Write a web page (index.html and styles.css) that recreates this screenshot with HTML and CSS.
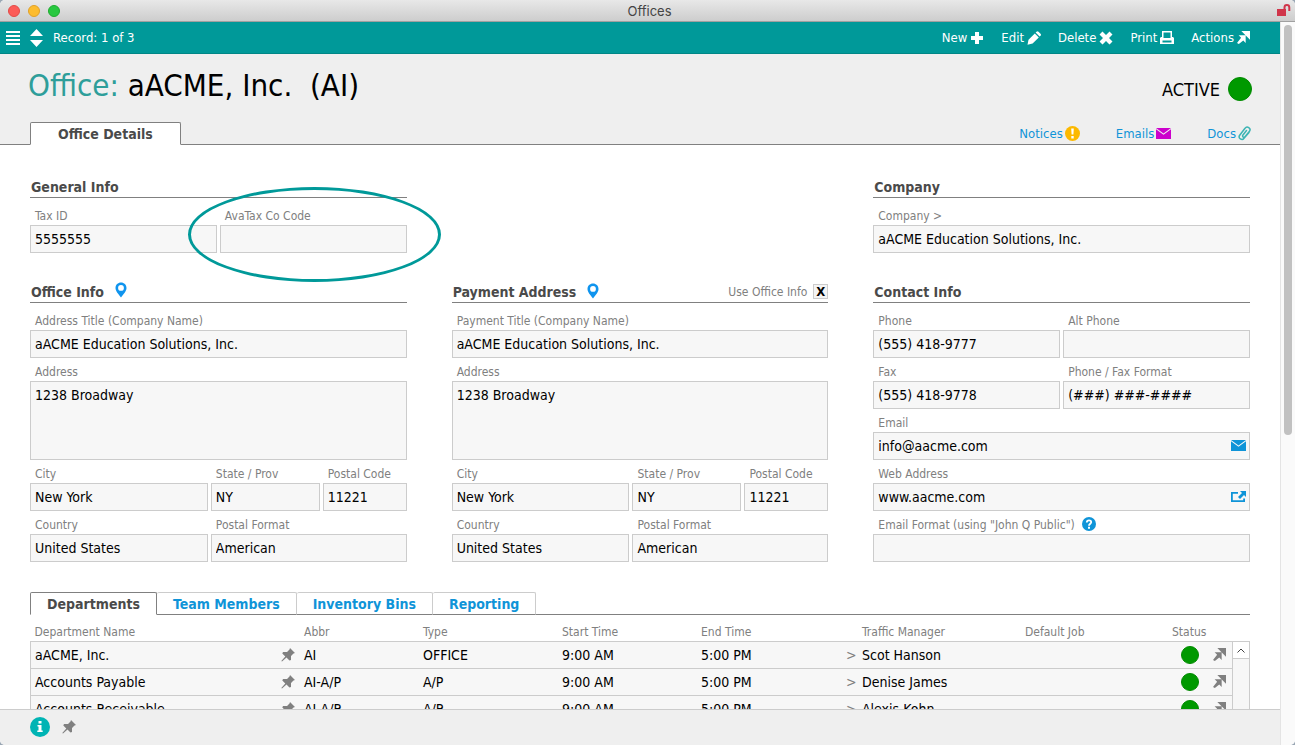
FILE: index.html
```html
<!DOCTYPE html>
<html lang="en">
<head>
  <meta charset="UTF-8">
  <title>Offices</title>
  <link rel="stylesheet" href="styles.css">
</head>
<body>
  <!-- Shared icons -->
  <svg class="sprite" aria-hidden="true">
    <symbol id="pin" viewBox="0 0 14 14"><path d="M9 0l5 5-1.500.6L10 8v4l-1.500.5-3-3L1 13.500.3 13l4-4.500-3-3L2 4h4l2.500-2.500z"/></symbol>
    <symbol id="go" viewBox="0 0 12 12"><path d="M4 0h8v8zM1.500 4H8v7L5.800 8.800 1.700 12 0 11l3.800-4.700z"/></symbol>
    <symbol id="marker" viewBox="0 0 12 16"><path fill-rule="evenodd" d="M6 .5c3.100 0 5.500 2.400 5.500 5.400C11.500 9 8.500 12 6 15.500 3.500 12 .5 9 .5 5.900.5 2.900 2.900.5 6 .5zM6 3a2.900 2.900 0 1 0 0 5.800A2.900 2.900 0 0 0 6 3z"/></symbol>
    <symbol id="mail" viewBox="0 0 15 11"><path d="M0 0h15L7.500 5.500zM0 1.200l7.500 5.500L15 1.200V11H0z"/></symbol>
  </svg>

  <div class="window">
    <header class="titlebar">
      <div class="lights">
        <span class="light red"></span>
        <span class="light yellow"></span>
        <span class="light green"></span>
      </div>
      <span class="window-title">Offices</span>
      <svg class="lock" viewBox="0 0 14 13"><path d="M0 5h9v7H0z"/><path class="shackle" d="M7.500 6V3.500a2.400 2.400 0 0 1 4.800 0V7"/></svg>
    </header>

    <div class="frame">
      <div class="app">

        <!-- Toolbar -->
        <nav class="toolbar">
          <button class="tool" aria-label="Menu"><svg width="14" height="14" viewBox="0 0 14 14"><path d="M0 0h14v2H0zM0 4h14v2H0zM0 8h14v2H0zM0 12h14v2H0z"/></svg></button>
          <button class="tool" aria-label="Next or previous record"><svg width="13" height="18" viewBox="0 0 13 18"><path d="M6.500 0L13 7H0zM0 11h13l-6.500 7z"/></svg></button>
          <span class="record">Record: 1 of 3</span>
          <div class="actions">
            <button class="tool">New <svg width="14" height="14" viewBox="0 0 14 14"><path d="M5 1h4v4h4v4H9v4H5V9H1V5h4z"/></svg></button>
            <button class="tool">Edit <svg width="14" height="14" viewBox="0 0 14 14"><path d="M9.500.7c.7-.7 1.300-.7 2 0L13.500 2.700c.7.700.7 1.300 0 2l-.9.9L8.600 1.600zM7.800 2.400l4 4-6.200 6.200L.5 13.700l1-5z"/></svg></button>
            <button class="tool">Delete <svg width="14" height="14" viewBox="0 0 14 14"><path d="M3.500.5L7 4l3.500-3.500 3 3L10 7l3.500 3.500-3 3L7 10l-3.500 3.500-3-3L4 7 .5 3.500z"/></svg></button>
            <button class="tool">Print <svg width="14" height="14" viewBox="0 0 14 14"><path fill-rule="evenodd" d="M2 0h10v6h1l1 1v6H0V7l1-1h1zm1.500 1.500V7h7V1.500zM2.500 9.500v2h9v-2z"/></svg></button>
            <button class="tool">Actions <svg width="13" height="13"><use href="#go"/></svg></button>
          </div>
        </nav>

        <!-- Record header -->
        <div class="record-head">
          <div class="headline">
            <h1><span class="kind">Office:</span> aACME, Inc.&nbsp; (AI)</h1>
            <div class="active-state">ACTIVE <span class="dot large"></span></div>
          </div>
          <div class="head-tabs">
            <button class="tab current main-tab">Office Details</button>
            <div class="links">
              <a href="#notices">Notices <svg width="15" height="15" viewBox="0 0 15 15"><circle cx="7.500" cy="7.500" r="7.500" fill="#fcb900"/><path fill="#fff" d="M6.200 2.500h2.600l-.4 6H6.600zM6.300 10h2.400v2.400H6.300z"/></svg></a>
              <a href="#emails">Emails <svg class="magenta" width="15" height="11"><use href="#mail"/></svg></a>
              <a href="#docs">Docs <svg width="13" height="15" viewBox="0 0 13 15"><path fill="none" stroke="#3cb4b4" stroke-width="1.500" stroke-linecap="round" d="M11 6.500l-5 5.800a2.500 2.500 0 0 1-4.300-3L7 2.300a2.700 2.700 0 0 1 4.500 3L7 10.700a1.300 1.300 0 0 1-2.200-1.500l3.700-4.700"/></svg></a>
            </div>
          </div>
        </div>

        <main class="content">
          <form class="sections">
            <section class="general">
              <h2>General Info</h2>
              <div class="fields halves">
                <div class="field">
                  <label for="tax-id">Tax ID</label>
                  <input type="text" id="tax-id" value="5555555">
                </div>
                <div class="field highlighted">
                  <label for="avatax">AvaTax Co Code</label>
                  <input type="text" id="avatax">
                </div>
              </div>
            </section>

            <section class="company">
              <h2>Company</h2>
              <div class="fields">
                <div class="field">
                  <label for="company">Company &gt;</label>
                  <input type="text" id="company" value="aACME Education Solutions, Inc.">
                </div>
              </div>
            </section>

            <section>
              <h2>Office Info <svg class="marker" width="12" height="16"><use href="#marker"/></svg></h2>
              <div class="fields address">
                <div class="field full">
                  <label for="o-title">Address Title (Company Name)</label>
                  <input type="text" id="o-title" value="aACME Education Solutions, Inc.">
                </div>
                <div class="field full">
                  <label for="o-address">Address</label>
                  <textarea id="o-address">1238 Broadway</textarea>
                </div>
                <div class="field">
                  <label for="o-city">City</label>
                  <input type="text" id="o-city" value="New York">
                </div>
                <div class="field">
                  <label for="o-state">State / Prov</label>
                  <input type="text" id="o-state" value="NY">
                </div>
                <div class="field">
                  <label for="o-zip">Postal Code</label>
                  <input type="text" id="o-zip" value="11221">
                </div>
                <div class="field">
                  <label for="o-country">Country</label>
                  <input type="text" id="o-country" value="United States">
                </div>
                <div class="field wide">
                  <label for="o-format">Postal Format</label>
                  <input type="text" id="o-format" value="American">
                </div>
              </div>
            </section>

            <section>
              <div class="section-head">
                <h2>Payment Address <svg class="marker" width="12" height="16"><use href="#marker"/></svg></h2>
                <label class="use-office">Use Office Info <input type="checkbox" checked></label>
              </div>
              <div class="fields address">
                <div class="field full">
                  <label for="p-title">Payment Title (Company Name)</label>
                  <input type="text" id="p-title" value="aACME Education Solutions, Inc.">
                </div>
                <div class="field full">
                  <label for="p-address">Address</label>
                  <textarea id="p-address">1238 Broadway</textarea>
                </div>
                <div class="field">
                  <label for="p-city">City</label>
                  <input type="text" id="p-city" value="New York">
                </div>
                <div class="field">
                  <label for="p-state">State / Prov</label>
                  <input type="text" id="p-state" value="NY">
                </div>
                <div class="field">
                  <label for="p-zip">Postal Code</label>
                  <input type="text" id="p-zip" value="11221">
                </div>
                <div class="field">
                  <label for="p-country">Country</label>
                  <input type="text" id="p-country" value="United States">
                </div>
                <div class="field wide">
                  <label for="p-format">Postal Format</label>
                  <input type="text" id="p-format" value="American">
                </div>
              </div>
            </section>

            <section>
              <h2>Contact Info</h2>
              <div class="fields halves">
                <div class="field">
                  <label for="phone">Phone</label>
                  <input type="text" id="phone" value="(555) 418-9777">
                </div>
                <div class="field">
                  <label for="alt-phone">Alt Phone</label>
                  <input type="text" id="alt-phone">
                </div>
                <div class="field">
                  <label for="fax">Fax</label>
                  <input type="text" id="fax" value="(555) 418-9778">
                </div>
                <div class="field">
                  <label for="phone-format">Phone / Fax Format</label>
                  <input type="text" id="phone-format" value="(###) ###-####">
                </div>
                <div class="field full">
                  <label for="email">Email</label>
                  <input type="text" id="email" value="info@aacme.com">
                  <button type="button" class="field-icon" aria-label="Send email"><svg width="15" height="11"><use href="#mail"/></svg></button>
                </div>
                <div class="field full">
                  <label for="web">Web Address</label>
                  <input type="text" id="web" value="www.aacme.com">
                  <button type="button" class="field-icon" aria-label="Open website"><svg width="15" height="11" viewBox="0 0 15 11"><path d="M0 1h7v1.700H1.800v6.500h10.400V7.500H14V11H0zM9 0h6v6l-2-2-4 4-2-2 4-4z"/></svg></button>
                </div>
                <div class="field full">
                  <label for="email-format">Email Format (using "John Q Public") <svg class="help" width="14" height="14" viewBox="0 0 14 14"><circle cx="7" cy="7" r="7"/><path fill="none" stroke="#fff" stroke-width="1.800" d="M4.800 5.500C4.800 2.500 9.300 2.700 9.200 5.200 9.200 6.700 7 6.800 7 8.800"/><path fill="#fff" d="M6 9.800h2v1.900H6z"/></svg></label>
                  <input type="text" id="email-format">
                </div>
              </div>
            </section>
          </form>

          <!-- Related lists -->
          <div class="tabs">
            <button class="tab current">Departments</button>
            <button class="tab">Team Members</button>
            <button class="tab">Inventory Bins</button>
            <button class="tab">Reporting</button>
          </div>
          <div class="portal">
            <table>
              <colgroup>
                <col><col class="c-pin"><col class="c-abbr"><col class="c-type"><col class="c-type"><col class="c-end"><col class="c-gt"><col class="c-manager"><col class="c-job"><col class="c-status"><col class="c-go">
              </colgroup>
              <thead>
                <tr>
                  <th>Department Name</th><th></th><th>Abbr</th><th>Type</th><th>Start Time</th><th>End Time</th><th></th><th>Traffic Manager</th><th>Default Job</th><th>Status</th><th></th>
                </tr>
              </thead>
              <tbody>
                <tr>
                  <td>aACME, Inc.</td><td><svg width="14" height="14"><use href="#pin"/></svg></td><td>AI</td><td>OFFICE</td><td>9:00 AM</td><td>5:00 PM</td><td class="gt">&gt;</td><td>Scot Hanson</td><td></td><td class="status"><span class="dot"></span></td><td><svg width="13" height="13"><use href="#go"/></svg></td>
                </tr>
                <tr>
                  <td>Accounts Payable</td><td><svg width="14" height="14"><use href="#pin"/></svg></td><td>AI-A/P</td><td>A/P</td><td>9:00 AM</td><td>5:00 PM</td><td class="gt">&gt;</td><td>Denise James</td><td></td><td class="status"><span class="dot"></span></td><td><svg width="13" height="13"><use href="#go"/></svg></td>
                </tr>
                <tr>
                  <td>Accounts Receivable</td><td><svg width="14" height="14"><use href="#pin"/></svg></td><td>AI-A/R</td><td>A/R</td><td>9:00 AM</td><td>5:00 PM</td><td class="gt">&gt;</td><td>Alexis Kohn</td><td></td><td class="status"><span class="dot"></span></td><td><svg width="13" height="13"><use href="#go"/></svg></td>
                </tr>
              </tbody>
            </table>
            <div class="portal-scroll">
              <button aria-label="Scroll up"><svg width="8" height="5" viewBox="0 0 8 5"><path d="M.5 4.500L4 1l3.500 3.500" fill="none" stroke="#444"/></svg></button>
            </div>
          </div>
        </main>

        <footer class="bottombar">
          <svg width="20" height="20" viewBox="0 0 20 20"><circle cx="10" cy="10" r="10" fill="#00b4b4"/><path fill="#fff" d="M8.500 4h3v2.500h-3zM7.500 8h4v5.500h1.200V15H7.300v-1.500h1.200v-4h-1z"/></svg>
          <svg width="14" height="14"><use href="#pin"/></svg>
        </footer>
      </div>

      <div class="scrollbar"><div class="thumb"></div></div>
    </div>
  </div>
</body>
</html>
```
FILE: styles.css
```css
* {
  box-sizing: border-box;
}

body {
  margin: 0;
  background: #9aa7b4;
  font-family: "DejaVu Sans Condensed", "Noto Sans", sans-serif;
  font-size: 14px;
  color: #000;
}

button, input, textarea {
  font-family: inherit;
  margin: 0;
}

button {
  background: none;
  border: none;
  padding: 0;
  cursor: pointer;
}

a {
  color: #0f94d8;
  text-decoration: none;
}

.sprite {
  display: none;
}

.window {
  display: flex;
  flex-direction: column;
  height: 100vh;
  border-radius: 5px;
  overflow: hidden;
  background: #fff;
}

/* Title bar */
.titlebar {
  display: grid;
  grid-template-columns: 1fr auto 1fr;
  align-items: center;
  height: 22px;
  padding: 0 4px 0 8px;
  background: linear-gradient(#e8e8e8, #cdcdcd);
  border-bottom: 1px solid #a0a0a0;
}

.lights {
  display: flex;
  gap: 8px;
}

.light {
  width: 12px;
  height: 12px;
  border-radius: 50%;
}

.red {
  background: #fc5b57;
  border: 1px solid #e24a46;
}

.yellow {
  background: #fdbc2e;
  border: 1px solid #e0a028;
}

.green {
  background: #28c840;
  border: 1px solid #1eab2f;
}

.window-title {
  font-family: Inter, sans-serif;
  font-size: 13px;
  color: #444;
}

.lock {
  width: 14px;
  height: 13px;
  justify-self: end;
  fill: #d0354a;
}

.shackle {
  fill: none;
  stroke: #d0354a;
  stroke-width: 2;
}

.frame {
  display: flex;
  flex: 1;
  min-height: 0;
}

.app {
  display: flex;
  flex-direction: column;
  flex: 1;
  min-width: 0;
}

.scrollbar {
  width: 15px;
  padding: 3px 2px 0 3px;
  background: #fafafa;
  border-left: 1px solid #e4e4e4;
}

.thumb {
  width: 8px;
  height: 57%;
  border-radius: 4px;
  background: #c1c1c1;
}

/* Toolbar */
.toolbar {
  display: flex;
  align-items: center;
  gap: 10px;
  height: 32px;
  padding: 0 30px 0 6px;
  background: #009999;
  border-bottom: 1px solid #008686;
  color: #fff;
  font-size: 13px;
}

.tool {
  display: flex;
  align-items: center;
  gap: 3px;
  color: #fff;
  font-size: 13px;
}

.tool svg {
  fill: #fff;
}

.actions {
  display: flex;
  gap: 17px;
  margin-left: auto;
}

/* Record header */
.record-head {
  height: 91px;
  background: #efefef;
  border-bottom: 1px solid #808080;
}

.headline {
  display: flex;
  justify-content: space-between;
  align-items: center;
  height: 68px;
  padding: 0 28px;
}

h1 {
  margin: 0;
  padding-bottom: 6px;
  font-size: 31px;
  font-weight: normal;
  line-height: 60px;
}

.kind {
  color: #2e9e9a;
}

.active-state {
  display: flex;
  align-items: center;
  gap: 8px;
  padding-top: 2px;
  font-size: 18px;
}

.dot {
  display: inline-block;
  width: 18px;
  height: 18px;
  border-radius: 50%;
  background: #009900;
  border: 1px solid #008a00;
}

.large {
  width: 24px;
  height: 24px;
}

.head-tabs {
  display: flex;
  justify-content: space-between;
  padding: 0 29px 0 30px;
}

.tab {
  height: 23px;
  padding: 0 16px;
  border: 1px solid #ccc;
  border-left: none;
  border-bottom-color: #808080;
  border-radius: 2px 2px 0 0;
  background: #fff;
  color: #0f94d8;
  font-size: 14px;
  font-weight: bold;
}

.current {
  border: 1px solid #808080;
  border-bottom-color: #fff;
  color: #4a4a4a;
}

.main-tab {
  padding: 0 27px;
}

.links {
  display: flex;
  gap: 36px;
}

.links a {
  display: flex;
  align-items: center;
  gap: 2px;
  font-size: 13px;
}

.magenta {
  fill: #cc00cc;
}

/* Field sections */
.content {
  flex: 1;
  min-height: 0;
  overflow: hidden;
  padding: 31px 30px 0;
}

.sections {
  display: grid;
  grid-template-columns: repeat(3, minmax(0, 1fr));
  gap: 28px 45px;
}

.company {
  grid-column: 3;
}

h2 {
  display: flex;
  align-items: center;
  gap: 11px;
  height: 22px;
  margin: 0;
  padding: 0 1px;
  border-bottom: 1px solid #808080;
  color: #4a4a4a;
  font-size: 14px;
  font-weight: bold;
}

.marker {
  height: 19px;
  padding-bottom: 3px;
  fill: #0f94ee;
}

.section-head {
  display: flex;
  justify-content: space-between;
  height: 22px;
  border-bottom: 1px solid #808080;
}

.section-head h2 {
  border: none;
}

.use-office {
  display: flex;
  align-items: center;
  gap: 6px;
  color: #808080;
  font-size: 12px;
}

.use-office input {
  appearance: none;
  display: grid;
  place-items: center;
  width: 15px;
  height: 15px;
  border: 1px solid #ccc;
  background: #f4f4f4;
}

.use-office input:checked::before {
  content: "X";
  color: #000;
  font-size: 13px;
  font-weight: bold;
  line-height: 13px;
}

.fields {
  display: grid;
  column-gap: 3px;
  padding-top: 4px;
}

.halves {
  grid-template-columns: 1fr 1fr;
}

.address {
  grid-template-columns: 178fr 109fr 84fr;
}

.full {
  grid-column: 1 / -1;
}

.wide {
  grid-column: span 2;
}

.field {
  position: relative;
  display: flex;
  flex-direction: column;
  min-width: 0;
}

.field label {
  display: flex;
  align-items: center;
  gap: 7px;
  height: 23px;
  padding: 5px 5px 0;
  color: #808080;
  font-size: 12px;
}

.field input, .field textarea {
  width: 100%;
  height: 28px;
  padding: 0 4px;
  border: 1px solid #ccc;
  border-radius: 0;
  background: #f7f7f7;
  color: #000;
  font-size: 14px;
}

.field textarea {
  height: 79px;
  padding-top: 5px;
  line-height: 17px;
  resize: none;
}

.field-icon {
  position: absolute;
  right: 4px;
  bottom: 9px;
  display: flex;
}

.field-icon svg, .help {
  fill: #0f94d8;
}

.help {
  margin-top: -2px;
}

/* Ring around the AvaTax field */
.highlighted::after {
  content: "";
  position: absolute;
  inset: -15px -34px -29px -32px;
  border: 3px solid #009999;
  border-radius: 50%;
  pointer-events: none;
}

/* Departments list */
.tabs {
  display: flex;
  margin-top: 30px;
  box-shadow: inset 0 -1px #808080;
}

.portal {
  display: flex;
}

table {
  flex: 1;
  width: 100%;
  min-width: 0;
  table-layout: fixed;
  border-collapse: collapse;
}

.c-pin { width: 23px; }
.c-abbr { width: 119px; }
.c-type { width: 139px; }
.c-end { width: 145px; }
.c-gt { width: 16px; }
.c-manager { width: 163px; }
.c-job { width: 147px; }
.c-status { width: 41px; }
.c-go { width: 24px; }

th {
  height: 26px;
  padding: 9px 0 0 5px;
  color: #808080;
  font-size: 12px;
  font-weight: normal;
  text-align: left;
  line-height: 15px;
  white-space: nowrap;
}

td {
  height: 27px;
  padding: 0 0 0 5px;
  border-top: 1px solid #ccc;
  background: #f7f7f7;
  white-space: nowrap;
}

th:first-child, td:first-child {
  padding-left: 4px;
}

td:first-child {
  border-left: 1px solid #ccc;
}

td svg {
  display: block;
  fill: #808080;
}

.gt {
  color: #808080;
}

.status .dot {
  display: block;
  margin: 0 auto;
}

.portal-scroll {
  width: 18px;
  margin-top: 26px;
  border: 1px solid #ccc;
  background: #f7f7f7;
}

.portal-scroll button {
  display: grid;
  place-items: center;
  width: 100%;
  height: 17px;
  background: #fff;
  border-bottom: 1px solid #ccc;
}

/* Bottom bar */
.bottombar {
  display: flex;
  align-items: center;
  gap: 12px;
  height: 36px;
  padding: 0 30px 2px;
  background: #efefef;
  border-top: 1px solid #ccc;
  fill: #808080;
}
```
